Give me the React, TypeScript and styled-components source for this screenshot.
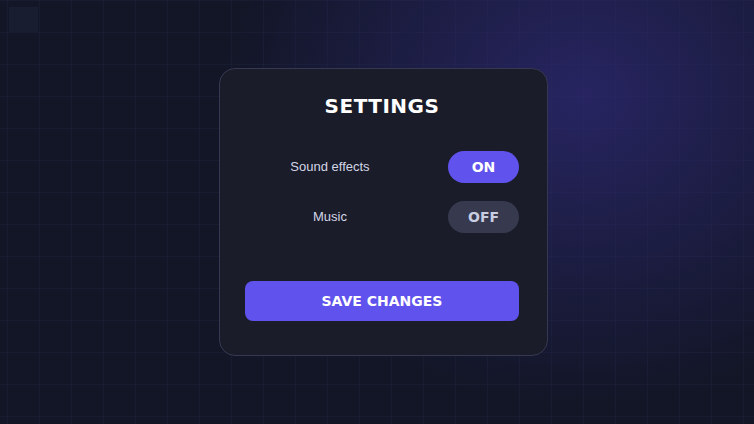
import React, { useState } from 'react'
import styled, { createGlobalStyle } from 'styled-components'

const GlobalStyle = createGlobalStyle`
    html, body {
        margin: 0;
        padding: 0;
        height: 100%;
    }
    body {
        background: #121626;
        font-family: "Liberation Sans", Arial, sans-serif;
        overflow: hidden;
    }
`

const heavy = `"DejaVu Sans", "Liberation Sans", sans-serif`

export default function App() {
    const [sound, setSound] = useState(true)
    const [music, setMusic] = useState(false)

    return (
        <Page>
            <GlobalStyle />
            <Corner />
            <Glow />
            <Card>
                <Title>SETTINGS</Title>

                <Rows>
                    <Row>
                        <Label>Sound effects</Label>
                        <Toggle $on={sound} onClick={() => setSound(!sound)}>
                            {sound ? 'ON' : 'OFF'}
                        </Toggle>
                    </Row>
                    <Row>
                        <Label>Music</Label>
                        <Toggle $on={music} onClick={() => setMusic(!music)}>
                            {music ? 'ON' : 'OFF'}
                        </Toggle>
                    </Row>
                </Rows>

                <SaveButton>SAVE CHANGES</SaveButton>
            </Card>
        </Page>
    )
}

const Page = styled.div`
    position: relative;
    height: 424px;
    display: flex;
    align-items: center;
    justify-content: center;
    padding-left: 13px;
    box-sizing: border-box;
    background-color: #121626;
    background-image:
        linear-gradient(rgba(60, 66, 110, 0.13) 1px, transparent 1px),
        linear-gradient(90deg, rgba(60, 66, 110, 0.13) 1px, transparent 1px);
    background-size: 32px 32px;
    background-position: 7px 0;
    overflow: hidden;
`

const Glow = styled.div`
    position: absolute;
    left: 583px;
    top: 96px;
    width: 720px;
    height: 620px;
    transform: translate(-50%, -50%);
    background: radial-gradient(closest-side, rgba(44, 40, 112, 0.8), rgba(44, 40, 112, 0.4) 50%, rgba(44, 40, 112, 0) 100%);
    pointer-events: none;
`

const Corner = styled.div`
    position: absolute;
    left: 9px;
    top: 7px;
    width: 29px;
    height: 25px;
    background: #181d30;
`

const Card = styled.div`
    position: relative;
    width: 329px;
    height: 288px;
    margin-top: -1px;
    box-sizing: border-box;
    padding: 22px 28px 34px 25px;
    background: #1a1c29;
    border: 1px solid #363851;
    border-radius: 16px;
    display: flex;
    flex-direction: column;
`

const Title = styled.h1`
    margin: 0;
    height: 30px;
    line-height: 30px;
    text-align: center;
    color: #ffffff;
    font-family: ${heavy};
    font-size: 20px;
    font-weight: 700;
    letter-spacing: 0.5px;
`

const Rows = styled.div`
    display: flex;
    flex-direction: column;
    gap: 18px;
    margin-top: 30px;
`

const Row = styled.div`
    display: flex;
    align-items: center;
    gap: 33px;
`

const Label = styled.span`
    flex: 1;
    text-align: center;
    color: #d3d6e6;
    font-size: 13px;
`

const Toggle = styled.button<{ $on: boolean }>`
    width: 71px;
    height: 32px;
    border: none;
    border-radius: 16px;
    background: ${p => (p.$on ? '#6052ec' : '#373a4e')};
    color: ${p => (p.$on ? '#ffffff' : '#c9cde2')};
    font-family: ${heavy};
    font-size: 14px;
    font-weight: 700;
    cursor: pointer;
`

const SaveButton = styled.button`
    margin-top: auto;
    height: 40px;
    border: none;
    border-radius: 8px;
    background: #6052ec;
    color: #ffffff;
    font-family: ${heavy};
    font-size: 14px;
    font-weight: 700;
    cursor: pointer;
`
